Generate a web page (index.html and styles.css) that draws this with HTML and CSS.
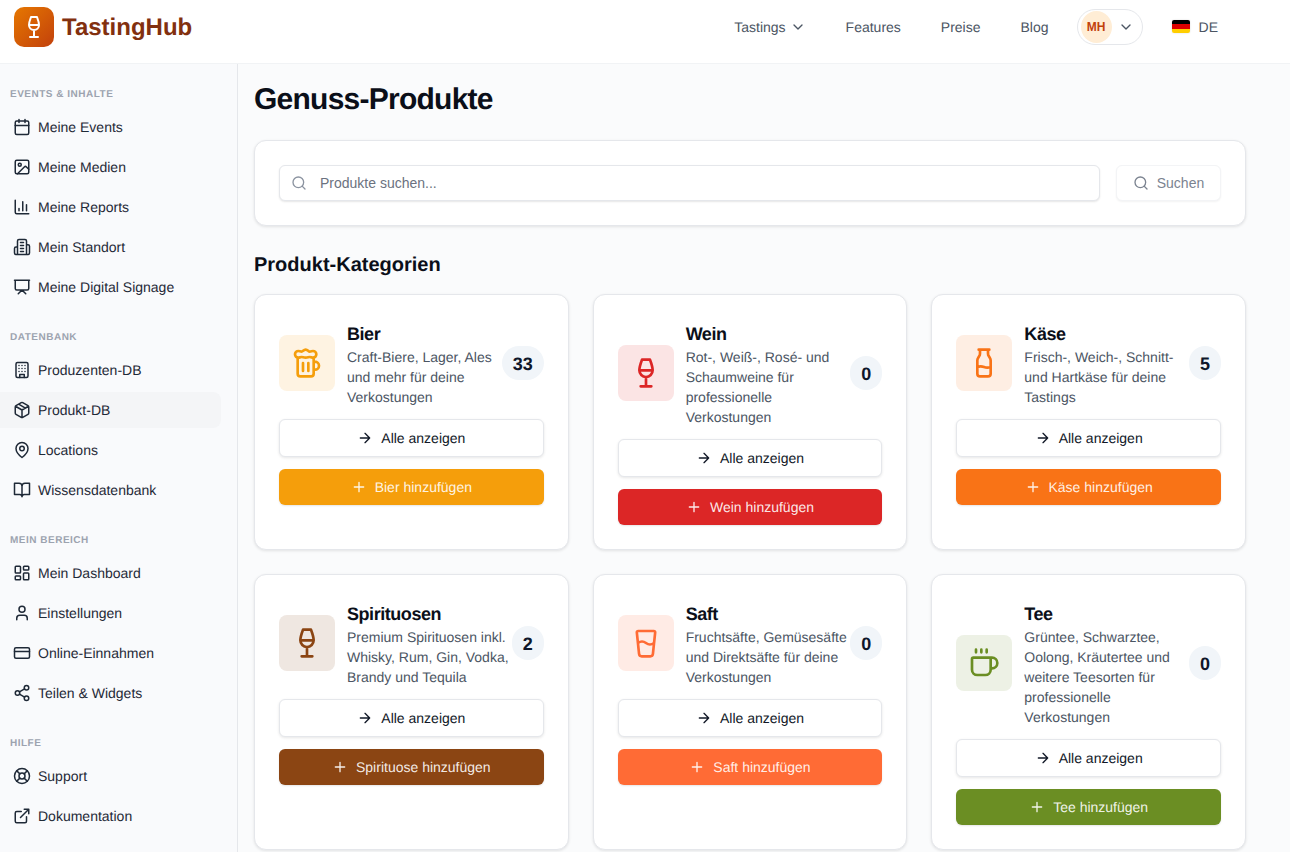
FILE: index.html
```html
<!DOCTYPE html>
<html lang="de">
<head>
    <meta charset="UTF-8">
    <meta name="viewport" content="width=device-width, initial-scale=1.0">
    <title>Genuss-Produkte - TastingHub</title>
    <link rel="stylesheet" href="styles.css">
</head>
<body>
    <!-- Icon sprite -->
    <svg class="sprite" xmlns="http://www.w3.org/2000/svg">
        <symbol id="i-wine" viewBox="0 0 24 24"><path d="M8 22h8M7 10h10M12 15v7M12 15a5 5 0 0 0 5-5c0-2-.5-4-2-8H9c-1.500 4-2 6-2 8a5 5 0 0 0 5 5Z"/></symbol>
        <symbol id="i-beer" viewBox="0 0 24 24"><path d="M17 11h1a3 3 0 0 1 0 6h-1M9 12v6M13 12v6M14 7.500c-1 0-1.440.5-3 .5s-2-.5-3-.5-1.720.5-2.500.5a2.500 2.500 0 0 1 0-5c.78 0 1.570.5 2.500.5S9.440 2 11 2s2 1.500 3 1.500 1.720-.5 2.500-.5a2.500 2.500 0 0 1 0 5c-.78 0-1.500-.5-2.500-.5ZM5 8v12a2 2 0 0 0 2 2h8a2 2 0 0 0 2-2V8"/></symbol>
        <symbol id="i-milk" viewBox="0 0 24 24"><path d="M8 2h8M9 2v2.789a4 4 0 0 1-.672 2.219l-.656.984A4 4 0 0 0 7 10.212V20a2 2 0 0 0 2 2h6a2 2 0 0 0 2-2v-9.789a4 4 0 0 0-.672-2.219l-.656-.984A4 4 0 0 1 15 4.788V2M7 15a6.472 6.472 0 0 1 5 0 6.470 6.470 0 0 0 5 0"/></symbol>
        <symbol id="i-glass" viewBox="0 0 24 24"><path d="M5.116 4.104A1 1 0 0 1 6.110 3h11.780a1 1 0 0 1 .994 1.105L17.190 20.210A2 2 0 0 1 15.200 22H8.800a2 2 0 0 1-2-1.790zM6 12a5 5 0 0 1 6 0 5 5 0 0 0 6 0"/></symbol>
        <symbol id="i-coffee" viewBox="0 0 24 24"><path d="M10 2v2M14 2v2M16 8a1 1 0 0 1 1 1v8a4 4 0 0 1-4 4H7a4 4 0 0 1-4-4V9a1 1 0 0 1 1-1h14a4 4 0 1 1 0 8h-1M6 2v2"/></symbol>
        <symbol id="i-chevron" viewBox="0 0 24 24"><path d="m6 9 6 6 6-6"/></symbol>
        <symbol id="i-search" viewBox="0 0 24 24"><circle cx="11" cy="11" r="8"/><path d="m21 21-4.300-4.300"/></symbol>
        <symbol id="i-arrow" viewBox="0 0 24 24"><path d="M5 12h14M12 5l7 7-7 7"/></symbol>
        <symbol id="i-plus" viewBox="0 0 24 24"><path d="M5 12h14M12 5v14"/></symbol>
        <symbol id="i-calendar" viewBox="0 0 24 24"><path d="M8 2v4M16 2v4M3 10h18"/><rect x="3" y="4" width="18" height="18" rx="2"/></symbol>
        <symbol id="i-image" viewBox="0 0 24 24"><rect x="3" y="3" width="18" height="18" rx="2"/><circle cx="9" cy="9" r="2"/><path d="m21 15-3.086-3.086a2 2 0 0 0-2.828 0L6 21"/></symbol>
        <symbol id="i-chart" viewBox="0 0 24 24"><path d="M3 3v16a2 2 0 0 0 2 2h16M8 17v-3M13 17V5M18 17V9"/></symbol>
        <symbol id="i-building2" viewBox="0 0 24 24"><path d="M6 22V4a2 2 0 0 1 2-2h8a2 2 0 0 1 2 2v18ZM6 12H4a2 2 0 0 0-2 2v6a2 2 0 0 0 2 2h2M18 9h2a2 2 0 0 1 2 2v9a2 2 0 0 1-2 2h-2M10 6h4M10 10h4M10 14h4M10 18h4"/></symbol>
        <symbol id="i-presentation" viewBox="0 0 24 24"><path d="M2 3h20M21 3v11a2 2 0 0 1-2 2H5a2 2 0 0 1-2-2V3M7 21l5-5 5 5"/></symbol>
        <symbol id="i-building" viewBox="0 0 24 24"><rect x="4" y="2" width="16" height="20" rx="2"/><path d="M9 22v-4h6v4M8 6h.01M16 6h.01M12 6h.01M12 10h.01M12 14h.01M16 10h.01M16 14h.01M8 10h.01M8 14h.01"/></symbol>
        <symbol id="i-package" viewBox="0 0 24 24"><path d="M11 21.730a2 2 0 0 0 2 0l7-4A2 2 0 0 0 21 16V8a2 2 0 0 0-1-1.730l-7-4a2 2 0 0 0-2 0l-7 4A2 2 0 0 0 3 8v8a2 2 0 0 0 1 1.730zM12 22V12M3.300 7 12 12l8.700-5M7.500 4.270l9 5.150"/></symbol>
        <symbol id="i-pin" viewBox="0 0 24 24"><path d="M20 10c0 6-8 12-8 12s-8-6-8-12a8 8 0 0 1 16 0Z"/><circle cx="12" cy="10" r="3"/></symbol>
        <symbol id="i-book" viewBox="0 0 24 24"><path d="M2 3h6a4 4 0 0 1 4 4v14a3 3 0 0 0-3-3H2zM22 3h-6a4 4 0 0 0-4 4v14a3 3 0 0 1 3-3h7z"/></symbol>
        <symbol id="i-dashboard" viewBox="0 0 24 24"><rect x="3" y="3" width="7" height="9" rx="1"/><rect x="14" y="3" width="7" height="5" rx="1"/><rect x="14" y="12" width="7" height="9" rx="1"/><rect x="3" y="16" width="7" height="5" rx="1"/></symbol>
        <symbol id="i-user" viewBox="0 0 24 24"><path d="M19 21v-2a4 4 0 0 0-4-4H9a4 4 0 0 0-4 4v2"/><circle cx="12" cy="7" r="4"/></symbol>
        <symbol id="i-card" viewBox="0 0 24 24"><rect x="2" y="5" width="20" height="14" rx="2"/><path d="M2 10h20"/></symbol>
        <symbol id="i-share" viewBox="0 0 24 24"><circle cx="18" cy="5" r="3"/><circle cx="6" cy="12" r="3"/><circle cx="18" cy="19" r="3"/><path d="M8.590 13.510l6.830 3.980M15.410 6.510l-6.820 3.980"/></symbol>
        <symbol id="i-support" viewBox="0 0 24 24"><circle cx="12" cy="12" r="10"/><circle cx="12" cy="12" r="4"/><path d="m4.930 4.930 4.240 4.240M14.830 9.170l4.240-4.240M14.830 14.830l4.240 4.240M9.170 14.830l-4.240 4.240"/></symbol>
        <symbol id="i-external" viewBox="0 0 24 24"><path d="M15 3h6v6M10 14 21 3M18 13v6a2 2 0 0 1-2 2H5a2 2 0 0 1-2-2V8a2 2 0 0 1 2-2h6"/></symbol>
    </svg>

    <!-- Top bar -->
    <header class="topbar">
        <a href="#" class="brand">
            <span class="brand__logo"><svg class="icon icon--logo"><use href="#i-wine"/></svg></span>
            <span class="brand__name">TastingHub</span>
        </a>
        <nav class="topnav">
            <a href="#" class="topnav__link">Tastings <svg class="icon icon--chevron"><use href="#i-chevron"/></svg></a>
            <a href="#" class="topnav__link">Features</a>
            <a href="#" class="topnav__link">Preise</a>
            <a href="#" class="topnav__link">Blog</a>
            <button class="usermenu">
                <span class="usermenu__avatar">MH</span>
                <svg class="icon icon--chevron"><use href="#i-chevron"/></svg>
            </button>
            <a href="#" class="lang">
                <span class="lang__flag"></span>
                DE
            </a>
        </nav>
    </header>

    <div class="layout">
        <!-- Sidebar -->
        <aside class="sidebar">
            <div class="sidebar__section">
                <h6 class="sidebar__label">Events &amp; Inhalte</h6>
                <a href="#" class="sidebar__item"><svg class="icon icon--nav"><use href="#i-calendar"/></svg>Meine Events</a>
                <a href="#" class="sidebar__item"><svg class="icon icon--nav"><use href="#i-image"/></svg>Meine Medien</a>
                <a href="#" class="sidebar__item"><svg class="icon icon--nav"><use href="#i-chart"/></svg>Meine Reports</a>
                <a href="#" class="sidebar__item"><svg class="icon icon--nav"><use href="#i-building2"/></svg>Mein Standort</a>
                <a href="#" class="sidebar__item"><svg class="icon icon--nav"><use href="#i-presentation"/></svg>Meine Digital Signage</a>
            </div>
            <div class="sidebar__section">
                <h6 class="sidebar__label">Datenbank</h6>
                <a href="#" class="sidebar__item"><svg class="icon icon--nav"><use href="#i-building"/></svg>Produzenten-DB</a>
                <a href="#" class="sidebar__item sidebar__item--active"><svg class="icon icon--nav"><use href="#i-package"/></svg>Produkt-DB</a>
                <a href="#" class="sidebar__item"><svg class="icon icon--nav"><use href="#i-pin"/></svg>Locations</a>
                <a href="#" class="sidebar__item"><svg class="icon icon--nav"><use href="#i-book"/></svg>Wissensdatenbank</a>
            </div>
            <div class="sidebar__section">
                <h6 class="sidebar__label">Mein Bereich</h6>
                <a href="#" class="sidebar__item"><svg class="icon icon--nav"><use href="#i-dashboard"/></svg>Mein Dashboard</a>
                <a href="#" class="sidebar__item"><svg class="icon icon--nav"><use href="#i-user"/></svg>Einstellungen</a>
                <a href="#" class="sidebar__item"><svg class="icon icon--nav"><use href="#i-card"/></svg>Online-Einnahmen</a>
                <a href="#" class="sidebar__item"><svg class="icon icon--nav"><use href="#i-share"/></svg>Teilen &amp; Widgets</a>
            </div>
            <div class="sidebar__section">
                <h6 class="sidebar__label">Hilfe</h6>
                <a href="#" class="sidebar__item"><svg class="icon icon--nav"><use href="#i-support"/></svg>Support</a>
                <a href="#" class="sidebar__item"><svg class="icon icon--nav"><use href="#i-external"/></svg>Dokumentation</a>
            </div>
        </aside>

        <!-- Main content -->
        <main class="main">
            <h1 class="main__title">Genuss-Produkte</h1>

            <form class="panel search" onsubmit="return false">
                <label class="search__field">
                    <svg class="icon icon--btn search__icon"><use href="#i-search"/></svg>
                    <input type="text" class="search__input" placeholder="Produkte suchen...">
                </label>
                <button type="submit" class="search__btn"><svg class="icon icon--btn"><use href="#i-search"/></svg>Suchen</button>
            </form>

            <h2 class="main__subtitle">Produkt-Kategorien</h2>

            <div class="categories">
                <article class="panel category category--bier">
                    <div class="category__head">
                        <span class="category__icon"><svg class="icon icon--category"><use href="#i-beer"/></svg></span>
                        <div class="category__text">
                            <h3 class="category__name">Bier</h3>
                            <p class="category__desc">Craft-Biere, Lager, Ales und mehr für deine Verkostungen</p>
                        </div>
                        <span class="category__count">33</span>
                    </div>
                    <a href="#" class="btn btn--outline"><svg class="icon icon--btn"><use href="#i-arrow"/></svg>Alle anzeigen</a>
                    <a href="#" class="btn btn--fill"><svg class="icon icon--btn"><use href="#i-plus"/></svg>Bier hinzufügen</a>
                </article>

                <article class="panel category category--wein">
                    <div class="category__head">
                        <span class="category__icon"><svg class="icon icon--category"><use href="#i-wine"/></svg></span>
                        <div class="category__text">
                            <h3 class="category__name">Wein</h3>
                            <p class="category__desc">Rot-, Weiß-, Rosé- und Schaumweine für professionelle Verkostungen</p>
                        </div>
                        <span class="category__count">0</span>
                    </div>
                    <a href="#" class="btn btn--outline"><svg class="icon icon--btn"><use href="#i-arrow"/></svg>Alle anzeigen</a>
                    <a href="#" class="btn btn--fill"><svg class="icon icon--btn"><use href="#i-plus"/></svg>Wein hinzufügen</a>
                </article>

                <article class="panel category category--kaese">
                    <div class="category__head">
                        <span class="category__icon"><svg class="icon icon--category"><use href="#i-milk"/></svg></span>
                        <div class="category__text">
                            <h3 class="category__name">Käse</h3>
                            <p class="category__desc">Frisch-, Weich-, Schnitt- und Hartkäse für deine Tastings</p>
                        </div>
                        <span class="category__count">5</span>
                    </div>
                    <a href="#" class="btn btn--outline"><svg class="icon icon--btn"><use href="#i-arrow"/></svg>Alle anzeigen</a>
                    <a href="#" class="btn btn--fill"><svg class="icon icon--btn"><use href="#i-plus"/></svg>Käse hinzufügen</a>
                </article>

                <article class="panel category category--spirit">
                    <div class="category__head">
                        <span class="category__icon"><svg class="icon icon--category"><use href="#i-wine"/></svg></span>
                        <div class="category__text">
                            <h3 class="category__name">Spirituosen</h3>
                            <p class="category__desc">Premium Spirituosen inkl. Whisky, Rum, Gin, Vodka, Brandy und Tequila</p>
                        </div>
                        <span class="category__count">2</span>
                    </div>
                    <a href="#" class="btn btn--outline"><svg class="icon icon--btn"><use href="#i-arrow"/></svg>Alle anzeigen</a>
                    <a href="#" class="btn btn--fill"><svg class="icon icon--btn"><use href="#i-plus"/></svg>Spirituose hinzufügen</a>
                </article>

                <article class="panel category category--saft">
                    <div class="category__head">
                        <span class="category__icon"><svg class="icon icon--category"><use href="#i-glass"/></svg></span>
                        <div class="category__text">
                            <h3 class="category__name">Saft</h3>
                            <p class="category__desc">Fruchtsäfte, Gemüsesäfte und Direktsäfte für deine Verkostungen</p>
                        </div>
                        <span class="category__count">0</span>
                    </div>
                    <a href="#" class="btn btn--outline"><svg class="icon icon--btn"><use href="#i-arrow"/></svg>Alle anzeigen</a>
                    <a href="#" class="btn btn--fill"><svg class="icon icon--btn"><use href="#i-plus"/></svg>Saft hinzufügen</a>
                </article>

                <article class="panel category category--tee">
                    <div class="category__head">
                        <span class="category__icon"><svg class="icon icon--category"><use href="#i-coffee"/></svg></span>
                        <div class="category__text">
                            <h3 class="category__name">Tee</h3>
                            <p class="category__desc">Grüntee, Schwarztee, Oolong, Kräutertee und weitere Teesorten für professionelle Verkostungen</p>
                        </div>
                        <span class="category__count">0</span>
                    </div>
                    <a href="#" class="btn btn--outline"><svg class="icon icon--btn"><use href="#i-arrow"/></svg>Alle anzeigen</a>
                    <a href="#" class="btn btn--fill"><svg class="icon icon--btn"><use href="#i-plus"/></svg>Tee hinzufügen</a>
                </article>
            </div>
        </main>
    </div>
</body>
</html>
```

FILE: styles.css
```css
:root {
	/* COLORS */
	--page: #fafbfc;
	--side: #f9fafc;
	--line: #e5e7eb;
	--ink: #111827;
	--muted: #4b5563;

	font-size: 14px;
	font-family: "Liberation Sans", Arial, sans-serif;
	text-rendering: geometricPrecision;
}

* {
	box-sizing: border-box;
}

html,
body {
	height: 100vh;
	margin: 0;
	overflow: hidden;
}

body {
	background-color: var(--page);
	color: var(--ink);
	display: flex;
	flex-direction: column;
}

a {
	color: inherit;
	text-decoration: none;
}

.sprite {
	display: none;
}

.icon {
	fill: none;
	flex-shrink: 0;
	stroke: currentColor;
	stroke-linecap: round;
	stroke-linejoin: round;
	stroke-width: 2;
}

.icon--logo {
	height: 24px;
	width: 24px;
}

.icon--chevron {
	height: 16px;
	width: 16px;
}

.icon--nav {
	height: 18px;
	width: 18px;
}

.icon--btn {
	height: 16px;
	width: 16px;
}

.icon--category {
	height: 32px;
	width: 32px;
}

/* Top bar */
.topbar {
	align-items: center;
	background-color: #fff;
	border-bottom: 1px solid #f1f3f5;
	display: flex;
	flex-shrink: 0;
	height: 64px;
	justify-content: space-between;
	padding: 0 72px 10px 14px;
}

.brand {
	align-items: center;
	display: flex;
	gap: 8px;
}

.brand__logo {
	align-items: center;
	background-image: linear-gradient(135deg, #e67700 0%, #c2410c 100%);
	border-radius: 10px;
	color: #fff;
	display: flex;
	height: 40px;
	justify-content: center;
	width: 40px;
}

.brand__name {
	color: #82300f;
	font-size: 24px;
	font-weight: 700;
	padding-top: 2px;
}

.topnav {
	align-items: center;
	color: #4b5563;
	display: flex;
}

.topnav__link {
	align-items: center;
	display: flex;
	gap: 4px;
	margin-right: 40px;
}

.topnav__link:nth-child(4) {
	margin-right: 28px;
}

.usermenu {
	align-items: center;
	background-color: #fff;
	border: 1px solid var(--line);
	border-radius: 18px;
	color: #4b5563;
	display: flex;
	gap: 6px;
	height: 36px;
	margin-right: 29px;
	padding: 0 8px 0 3px;
	width: 66px;
}

.usermenu__avatar {
	align-items: center;
	background-color: #ffedd5;
	border-radius: 50%;
	color: #c2410c;
	display: flex;
	font-size: 12px;
	font-weight: 700;
	height: 32px;
	justify-content: center;
	width: 32px;
}

.lang {
	align-items: center;
	display: flex;
	gap: 9px;
}

.lang__flag {
	background-image: linear-gradient(#000 0 33.3%, #dd0000 33.3% 66.6%, #ffce00 66.6%);
	border-radius: 2px;
	box-shadow: 0 0 2px rgba(0, 0, 0, 0.15);
	height: 13px;
	width: 18px;
}

/* Layout */
.layout {
	display: flex;
	flex: 1;
	min-height: 0;
}

.sidebar {
	background-color: var(--side);
	border-right: 1px solid var(--line);
	display: flex;
	flex-direction: column;
	flex-shrink: 0;
	gap: 23px;
	padding: 21px 16px 0 0;
	width: 238px;
}

.sidebar__section {
	display: flex;
	flex-direction: column;
	gap: 4px;
}

.sidebar__label {
	color: #9ca3af;
	font-size: 10px;
	font-weight: 700;
	letter-spacing: 0.5px;
	line-height: 14px;
	margin: 0 0 3px;
	padding: 3px 0 0 10px;
	text-transform: uppercase;
}

.sidebar__item {
	align-items: center;
	border-radius: 0 8px 8px 0;
	color: #1f2937;
	display: flex;
	gap: 7px;
	height: 36px;
	padding-left: 13px;
}

.sidebar__item--active {
	background-color: #f4f5f7;
}

.main {
	flex: 1;
	min-width: 0;
	padding: 18px 44px 0 16px;
}

.main__title {
	color: #0b0f19;
	font-size: 30px;
	font-weight: 700;
	letter-spacing: -0.75px;
	line-height: 36px;
	margin: 0 0 22px;
}

.main__subtitle {
	color: #0b0f19;
	font-size: 20px;
	font-weight: 700;
	line-height: 28px;
	margin: 25px 0 15px;
}

.panel {
	background-color: #fff;
	border: 1px solid var(--line);
	border-radius: 12px;
	box-shadow: 0 1px 3px rgba(0, 0, 0, 0.1);
	padding: 24px;
}

/* Search */
.search {
	display: flex;
	gap: 16px;
}

.search__field {
	flex: 1;
	position: relative;
}

.search__icon {
	color: #8b93a0;
	left: 12px;
	position: absolute;
	top: 10px;
}

.search__input {
	border: 1px solid var(--line);
	border-radius: 6px;
	box-shadow: 0 1px 2px rgba(0, 0, 0, 0.1);
	color: var(--ink);
	font-family: inherit;
	font-size: 14px;
	height: 36px;
	outline: none;
	padding: 0 12px 0 40px;
	width: 100%;
}

.search__input::placeholder {
	color: #6b7280;
	opacity: 1;
}

.search__btn {
	align-items: center;
	background-color: #fff;
	border: 1px solid #f3f4f6;
	border-radius: 6px;
	box-shadow: 0 1px 2px rgba(0, 0, 0, 0.05);
	color: #7b8390;
	display: flex;
	font-family: inherit;
	font-size: 14px;
	gap: 8px;
	height: 36px;
	justify-content: center;
	width: 105px;
}

/* Categories */
.categories {
	display: grid;
	gap: 24px;
	grid-template-columns: repeat(3, 1fr);
}

.category--bier {
	--accent: #f59e0b;
	--tint: #fef3e2;
}

.category--wein {
	--accent: #dc2626;
	--tint: #fbe4e4;
}

.category--kaese {
	--accent: #f97316;
	--tint: #feeee3;
}

.category--spirit {
	--accent: #8b4513;
	--tint: #efe7e1;
}

.category--saft {
	--accent: #ff6b35;
	--tint: #ffebe5;
}

.category--tee {
	--accent: #6b8e23;
	--tint: #edf1e5;
}

.category__head {
	align-items: center;
	display: flex;
	margin-bottom: 12px;
}

.category__icon {
	align-items: center;
	background-color: var(--tint);
	border-radius: 8px;
	color: var(--accent);
	display: flex;
	flex-shrink: 0;
	height: 56px;
	justify-content: center;
	margin-right: 12px;
	width: 56px;
}

.category__text {
	flex: 1;
	min-width: 0;
}

.category__name {
	color: #0b0f19;
	font-size: 18px;
	font-weight: 700;
	letter-spacing: -0.45px;
	line-height: 26px;
	margin: 0;
	padding-top: 2px;
}

.category__desc {
	color: var(--muted);
	line-height: 20px;
	margin: 0;
}

.category__count {
	background-color: #f1f5f9;
	border-radius: 17px;
	color: #0f172a;
	flex-shrink: 0;
	font-size: 18px;
	font-weight: 700;
	height: 34px;
	line-height: 37px;
	padding: 0 11px;
}

.btn {
	align-items: center;
	border-radius: 6px;
	display: flex;
	gap: 8px;
	justify-content: center;
}

.btn--outline {
	background-color: #fff;
	border: 1px solid var(--line);
	box-shadow: 0 1px 3px rgba(0, 0, 0, 0.1);
	color: var(--ink);
	height: 38px;
	margin-bottom: 12px;
}

.btn--fill {
	background-color: var(--accent);
	box-shadow: 0 1px 2px rgba(0, 0, 0, 0.1);
	color: rgba(255, 255, 255, 0.9);
	height: 36px;
}
```
